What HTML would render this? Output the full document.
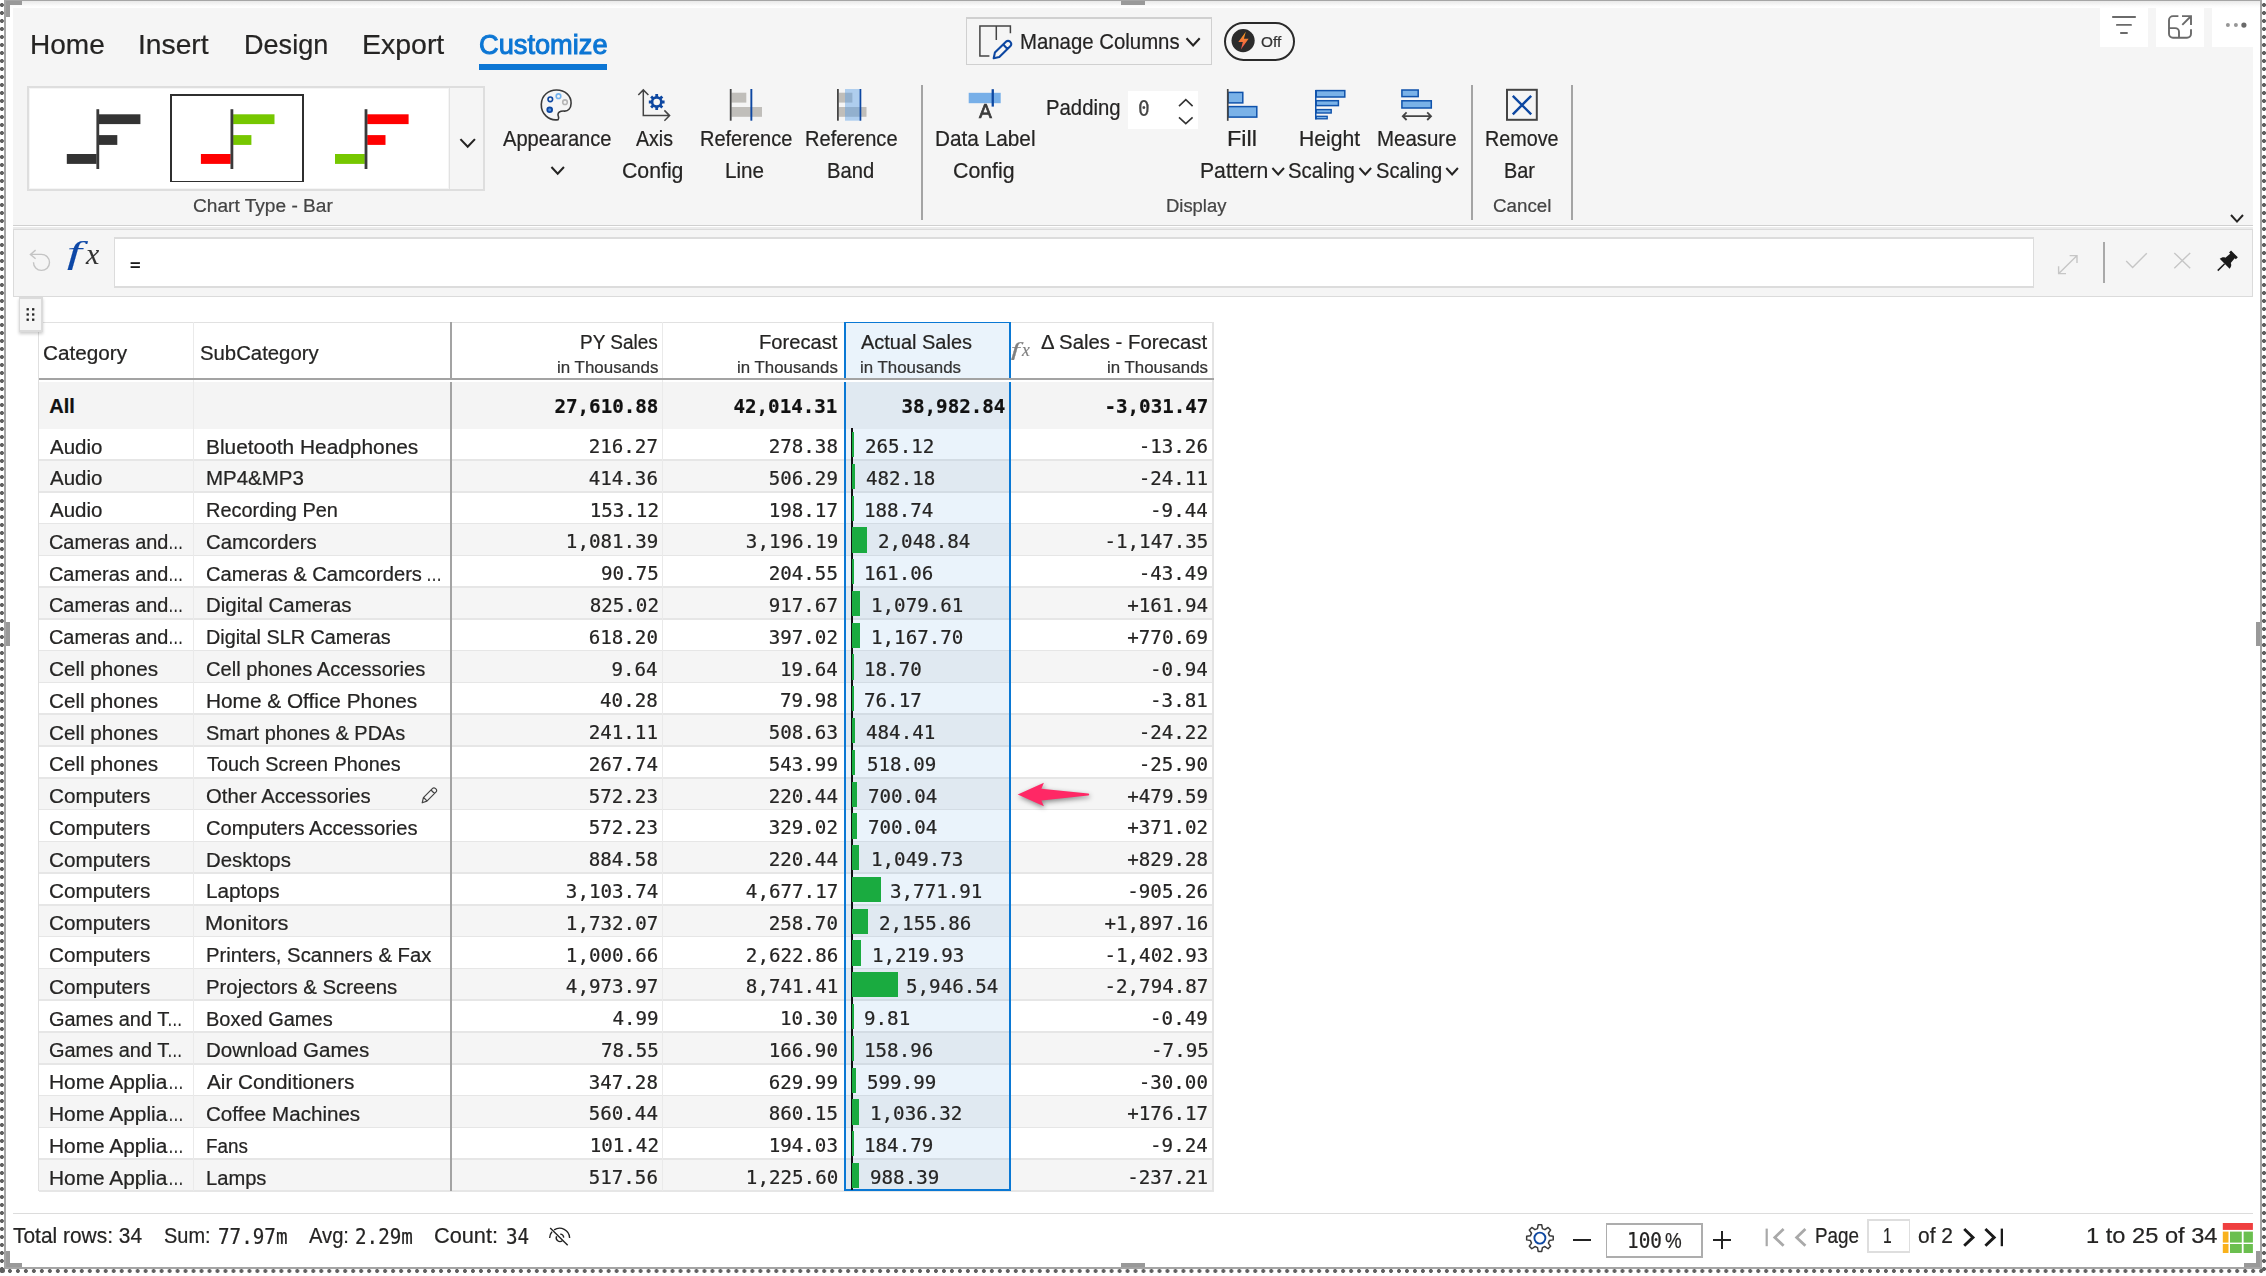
<!DOCTYPE html>
<html lang="en"><head><meta charset="utf-8"><title>Inforiver - Customize</title>
<style>
html,body{margin:0;padding:0}
body{width:2266px;height:1276px;background:#fff;overflow:hidden;position:relative;font-family:"Liberation Sans",sans-serif;color:#252423}
.b{position:absolute;display:block}
.t{position:absolute;white-space:pre;line-height:1;display:block;-webkit-text-stroke:0.22px currentColor}
.m{font-family:"DejaVu Sans Mono","Liberation Mono",monospace}
.s{font-family:"Liberation Serif",serif}
</style></head>
<body>
<!-- frame -->
<div class="b" style="left:0;top:0;width:4px;height:1274px;background:radial-gradient(circle at 1.9px 5px,#606060 0,#606060 1.6px,rgba(96,96,96,0) 2.3px);background-size:4px 8px"></div>
<div class="b" style="left:2262px;top:0;width:4px;height:1274px;background:radial-gradient(circle at 2px 5px,#606060 0,#606060 1.6px,rgba(96,96,96,0) 2.3px);background-size:4px 8px"></div>
<div class="b" style="left:0;top:1269px;width:2272px;height:4px;transform:scaleX(0.997875);transform-origin:0 0;background:radial-gradient(circle at 1.92px 2px,#606060 0,#606060 1.6px,rgba(96,96,96,0) 2.3px);background-size:8px 4px"></div>
<div class="b" style="left:4px;top:0px;width:2px;height:1269px;background:#a5a5a5;"></div>
<div class="b" style="left:2260px;top:0px;width:2px;height:1269px;background:#a5a5a5;"></div>
<div class="b" style="left:4px;top:0px;width:2258px;height:1px;background:#a5a5a5;"></div>
<div class="b" style="left:4px;top:1267px;width:2258px;height:2px;background:#a5a5a5;"></div>
<div class="b" style="left:6px;top:1px;width:2254px;height:7px;background:linear-gradient(#e9e9e9,#fbfbfb 70%,#fff);"></div>
<div class="b" style="left:6px;top:1px;width:16px;height:3.6px;background:#999;"></div>
<div class="b" style="left:6px;top:1px;width:3.8px;height:15.6px;background:#999;"></div>
<div class="b" style="left:1121px;top:1px;width:24px;height:3.8px;background:#999;"></div>
<div class="b" style="left:6px;top:622px;width:4px;height:24px;background:#999;"></div>
<div class="b" style="left:2256px;top:622px;width:4px;height:24px;background:#999;"></div>
<div class="b" style="left:6px;top:1263.3px;width:16px;height:3.7px;background:#999;"></div>
<div class="b" style="left:6px;top:1251.3px;width:3.8px;height:15.7px;background:#999;"></div>
<div class="b" style="left:1121px;top:1263.2px;width:24px;height:3.8px;background:#999;"></div>
<div class="b" style="left:2244.3px;top:1263.3px;width:15.7px;height:3.7px;background:#999;"></div>
<div class="b" style="left:2256.2px;top:1251.3px;width:3.8px;height:15.7px;background:#999;"></div>
<div class="b" style="left:0;top:1268px;width:5px;height:5px;border-radius:3px;background:#606060"></div>
<div class="b" style="left:12.9px;top:8px;width:2240.2px;height:217.2px;background:#f5f5f5;"></div>
<!-- ribbon -->
<span class="t" style="top:30.60px;font-size:28px;left:29.56px;transform:scaleX(1.0011);transform-origin:0 0;">Home</span>
<span class="t" style="top:30.60px;font-size:28px;left:138.06px;transform:scaleX(1.0083);transform-origin:0 0;">Insert</span>
<span class="t" style="top:30.60px;font-size:28px;left:243.83px;transform:scaleX(0.9672);transform-origin:0 0;">Design</span>
<span class="t" style="top:30.60px;font-size:28px;left:361.52px;transform:scaleX(1.0166);transform-origin:0 0;">Export</span>
<span class="t" style="top:30.60px;font-size:28px;color:#0c76d4;left:479.24px;transform:scaleX(0.9719);transform-origin:0 0;-webkit-text-stroke:1px #0c76d4;">Customize</span>
<div class="b" style="left:479.2px;top:64px;width:128.2px;height:5.9px;background:#0c76d4;"></div>
<div class="b" style="left:965.6px;top:16.9px;width:246.6px;height:1.7px;background:#d0d0d0;"></div>
<div class="b" style="left:965.6px;top:63.8px;width:246.6px;height:1.7px;background:#d0d0d0;"></div>
<div class="b" style="left:965.6px;top:16.9px;width:1.7px;height:48.6px;background:#d0d0d0;"></div>
<div class="b" style="left:1210.5px;top:16.9px;width:1.7px;height:48.6px;background:#d0d0d0;"></div>
<svg class="b" style="left:975px;top:20px" width="42" height="42" viewBox="975 20 42 42"><path d="M1010.4 33.2V26.1H979.9V56.1H989.4M996.3 26.1V40" fill="none" stroke="#444" stroke-width="1.5"/><path d="M1006.2 41.6a2.6 2.6 0 0 1 3.7 0l0.6 0.6a2.6 2.6 0 0 1 0 3.7L999.3 57l-5.6 1.2 1.2-5.6zM1003.2 44.6l4.3 4.3" fill="none" stroke="#0d47a1" stroke-width="2.1" stroke-linejoin="round"/></svg>
<span class="t" style="top:30.58px;font-size:22px;left:1019.67px;transform:scaleX(0.9256);transform-origin:0 0;">Manage Columns</span>
<svg class="b" style="left:1183px;top:35px" width="20" height="14" viewBox="1183 35 20 14"><path d="M1186.5 38.199999999999996L1193.1 45.4L1199.6999999999998 38.199999999999996" fill="none" stroke="#252423" stroke-width="2.1" stroke-linecap="butt" stroke-linejoin="miter"/></svg>
<div class="b" style="left:1224.4px;top:21.9px;width:70.8px;height:38.9px;border:2px solid #2a2a2a;border-radius:20px;box-sizing:border-box;"></div>
<svg class="b" style="left:1230px;top:28px" width="26" height="26" viewBox="1230 28 26 26"><defs><linearGradient id="lg" x1="0" y1="0" x2="0" y2="1"><stop offset="0" stop-color="#f9a11b"/><stop offset="1" stop-color="#ef4e55"/></linearGradient></defs><circle cx="1243.1" cy="40.6" r="11.6" fill="#2b2b2b"/><path d="M1245.8 31.8L1238.3 42.1h4.5l-1.9 7.5L1248.6 38.8h-4.7z" fill="url(#lg)"/></svg>
<span class="t" style="top:35.23px;font-size:14.5px;color:#333;left:1260.51px;transform:scaleX(1.0602);transform-origin:0 0;">Off</span>
<div class="b" style="left:2100px;top:8px;width:48px;height:39px;background:#fff;"></div>
<div class="b" style="left:2156px;top:8px;width:48px;height:39px;background:#fff;"></div>
<div class="b" style="left:2212px;top:8px;width:41px;height:39px;background:#fff;"></div>
<svg class="b" style="left:2108px;top:10px" width="32" height="30" viewBox="2108 10 32 30"><path d="M2112.9 17H2135.1M2116.9 24.9H2131M2120.9 33H2127" stroke="#6a6a6a" stroke-width="1.9" stroke-linecap="round" fill="none"/></svg>
<svg class="b" style="left:2164px;top:10px" width="32" height="32" viewBox="2164 10 32 32"><path d="M2178.4 16.15H2173a4 4 0 0 0-4 4V33.8a4 4 0 0 0 4 4h14a4 4 0 0 0 4-4V29.2" fill="none" stroke="#6a6a6a" stroke-width="1.9"/><path d="M2169 28.1h6.2a3.8 3.8 0 0 1 3.8 3.8v5.9" fill="none" stroke="#6a6a6a" stroke-width="1.9"/><path d="M2182.3 24.8L2190.6 16.5M2182 16.15h9v8.8" fill="none" stroke="#6a6a6a" stroke-width="1.9"/></svg>
<svg class="b" style="left:2222px;top:20px" width="28" height="10" viewBox="2222 20 28 10"><circle cx="2227.9" cy="25.1" r="2" fill="#969696"/><circle cx="2235.9" cy="25.1" r="2" fill="#969696"/><circle cx="2243.9" cy="25.1" r="2.6" fill="#6a6a6a"/></svg>
<svg class="b" style="left:2228px;top:212px" width="19" height="13" viewBox="2228 212 19 13"><path d="M2231.0 215.0L2237 221.60000000000002L2243.0 215.0" fill="none" stroke="#252423" stroke-width="2" stroke-linecap="butt" stroke-linejoin="miter"/></svg>
<div class="b" style="left:27.3px;top:86.3px;width:457.8px;height:104.4px;background:#f5f5f5;border:2px solid #dedede;box-sizing:border-box;"></div>
<div class="b" style="left:29.8px;top:88.8px;width:418px;height:99.4px;background:#fff;"></div>
<div class="b" style="left:448.5px;top:88px;width:1.3px;height:101px;background:#e2e2e2;"></div>
<div class="b" style="left:170px;top:94.3px;width:134px;height:1.7px;background:#2f2f2f;"></div>
<div class="b" style="left:170px;top:180.6px;width:134px;height:1.7px;background:#2f2f2f;"></div>
<div class="b" style="left:170px;top:94.3px;width:1.7px;height:88px;background:#2f2f2f;"></div>
<div class="b" style="left:302.3px;top:94.3px;width:1.7px;height:88px;background:#2f2f2f;"></div>
<svg class="b" style="left:60px;top:100px" width="370" height="80" viewBox="60 100 370 80"><rect x="99.0" y="114.3" width="41.4" height="9.8" fill="#333"/><rect x="99.0" y="135.1" width="18.3" height="9.8" fill="#333"/><rect x="66.80000000000001" y="154" width="29.8" height="9.9" fill="#333"/><rect x="96.4" y="109.2" width="2.8" height="59.8" fill="#3a3a3a"/><rect x="233.1" y="114.3" width="41.4" height="9.8" fill="#76c700"/><rect x="233.1" y="135.1" width="18.3" height="9.8" fill="#76c700"/><rect x="200.9" y="154" width="29.8" height="9.9" fill="#ff0000"/><rect x="230.5" y="109.2" width="2.8" height="59.8" fill="#3a3a3a"/><rect x="367.20000000000005" y="114.3" width="41.4" height="9.8" fill="#ff0000"/><rect x="367.20000000000005" y="135.1" width="18.3" height="9.8" fill="#ff0000"/><rect x="335.0" y="154" width="29.8" height="9.9" fill="#76c700"/><rect x="364.6" y="109.2" width="2.8" height="59.8" fill="#3a3a3a"/></svg>
<svg class="b" style="left:457px;top:136px" width="21" height="14" viewBox="457 136 21 14"><path d="M460.45 139.1L467.7 146.70000000000002L474.95 139.1" fill="none" stroke="#252423" stroke-width="2.1" stroke-linecap="butt" stroke-linejoin="miter"/></svg>
<span class="t" style="top:196.69px;font-size:18.8px;color:#444;left:193.34px;transform:scaleX(1.0176);transform-origin:0 0;">Chart Type - Bar</span>
<div class="b" style="left:921.1px;top:85.1px;width:2px;height:135.3px;background:#a4a4a4;"></div>
<div class="b" style="left:1470.6px;top:85.1px;width:2px;height:135.3px;background:#a4a4a4;"></div>
<div class="b" style="left:1571.05px;top:85.1px;width:2px;height:135.3px;background:#a4a4a4;"></div>
<span class="t" style="top:128.02px;font-size:21.6px;left:502.60px;transform:scaleX(0.9320);transform-origin:0 0;">Appearance</span>
<svg class="b" style="left:548px;top:164px" width="19" height="13" viewBox="548 164 19 13"><path d="M551.45 167.0L557.7 173.8L563.95 167.0" fill="none" stroke="#252423" stroke-width="2" stroke-linecap="butt" stroke-linejoin="miter"/></svg>
<span class="t" style="top:128.02px;font-size:21.6px;left:636.00px;transform:scaleX(0.9060);transform-origin:0 0;">Axis</span>
<span class="t" style="top:159.82px;font-size:21.6px;left:621.74px;transform:scaleX(0.9843);transform-origin:0 0;">Config</span>
<span class="t" style="top:128.02px;font-size:21.6px;left:699.60px;transform:scaleX(0.9259);transform-origin:0 0;">Reference</span>
<span class="t" style="top:159.82px;font-size:21.6px;left:724.55px;transform:scaleX(0.9548);transform-origin:0 0;">Line</span>
<span class="t" style="top:128.02px;font-size:21.6px;left:805.49px;transform:scaleX(0.9290);transform-origin:0 0;">Reference</span>
<span class="t" style="top:159.82px;font-size:21.6px;left:826.69px;transform:scaleX(0.9344);transform-origin:0 0;">Band</span>
<span class="t" style="top:128.02px;font-size:21.6px;left:934.64px;transform:scaleX(0.9624);transform-origin:0 0;">Data Label</span>
<span class="t" style="top:159.82px;font-size:21.6px;left:952.54px;transform:scaleX(0.9860);transform-origin:0 0;">Config</span>
<span class="t" style="top:97.02px;font-size:21.6px;left:1045.98px;transform:scaleX(0.9404);transform-origin:0 0;">Padding</span>
<div class="b" style="left:1127.7px;top:90.6px;width:70.4px;height:38.5px;background:#fff;"></div>
<span class="t m" style="top:99.43px;font-size:21px;color:#444;left:1137.63px;transform:scaleX(0.9300);transform-origin:0 0;">0</span>
<svg class="b" style="left:1176px;top:96px" width="20" height="13" viewBox="1176 96 20 13"><path d="M1179.0 106.10000000000001L1185.8 99.7L1192.6 106.10000000000001" fill="none" stroke="#333" stroke-width="1.6" stroke-linecap="butt" stroke-linejoin="miter"/></svg>
<svg class="b" style="left:1176px;top:114px" width="20" height="13" viewBox="1176 114 20 13"><path d="M1179.0 117.3L1185.8 123.7L1192.6 117.3" fill="none" stroke="#333" stroke-width="1.6" stroke-linecap="butt" stroke-linejoin="miter"/></svg>
<span class="t" style="top:128.02px;font-size:21.6px;left:1227.42px;transform:scaleX(1.0857);transform-origin:0 0;">Fill</span>
<span class="t" style="top:159.82px;font-size:21.6px;left:1199.71px;transform:scaleX(0.9800);transform-origin:0 0;">Pattern</span>
<svg class="b" style="left:1269px;top:165px" width="18" height="13" viewBox="1269 165 18 13"><path d="M1272.4 168.0L1278.2 174.39999999999998L1284.0 168.0" fill="none" stroke="#252423" stroke-width="2" stroke-linecap="butt" stroke-linejoin="miter"/></svg>
<span class="t" style="top:128.02px;font-size:21.6px;left:1299.21px;transform:scaleX(0.9787);transform-origin:0 0;">Height</span>
<span class="t" style="top:159.82px;font-size:21.6px;left:1288.48px;transform:scaleX(0.9435);transform-origin:0 0;">Scaling</span>
<svg class="b" style="left:1356px;top:165px" width="18" height="13" viewBox="1356 165 18 13"><path d="M1359.5 168.0L1365.3 174.39999999999998L1371.1 168.0" fill="none" stroke="#252423" stroke-width="2" stroke-linecap="butt" stroke-linejoin="miter"/></svg>
<span class="t" style="top:128.02px;font-size:21.6px;left:1376.76px;transform:scaleX(0.9468);transform-origin:0 0;">Measure</span>
<span class="t" style="top:159.82px;font-size:21.6px;left:1375.69px;transform:scaleX(0.9332);transform-origin:0 0;">Scaling</span>
<svg class="b" style="left:1443px;top:165px" width="18" height="13" viewBox="1443 165 18 13"><path d="M1446.3 168.0L1452.1 174.39999999999998L1457.8999999999999 168.0" fill="none" stroke="#252423" stroke-width="2" stroke-linecap="butt" stroke-linejoin="miter"/></svg>
<span class="t" style="top:128.02px;font-size:21.6px;left:1484.62px;transform:scaleX(0.9144);transform-origin:0 0;">Remove</span>
<span class="t" style="top:159.82px;font-size:21.6px;left:1504.11px;transform:scaleX(0.9196);transform-origin:0 0;">Bar</span>
<span class="t" style="top:196.69px;font-size:18.8px;color:#444;left:1165.93px;transform:scaleX(0.9807);transform-origin:0 0;">Display</span>
<span class="t" style="top:196.69px;font-size:18.8px;color:#444;left:1493.06px;transform:scaleX(0.9981);transform-origin:0 0;">Cancel</span>
<svg class="b" style="left:536px;top:85px" width="40" height="40" viewBox="536 85 40 40"><path d="M558.2 119.6C549 121.2 541 114 541.3 104.3C541.6 95.3 548.6 89.9 556.6 90C565.2 90.1 571.2 96 571.1 103.2C571 108.8 568 111.3 564.3 111.1C561 110.9 558.3 111.9 558 114.4C557.8 116.2 559.6 117.6 558.2 119.6Z" fill="none" stroke="#3a3a3a" stroke-width="1.6"/><circle cx="550.3" cy="99.3" r="2.3" fill="none" stroke="#0d47a1" stroke-width="1.6"/><circle cx="558.5" cy="96.2" r="2.3" fill="none" stroke="#74b3ee" stroke-width="1.6"/><circle cx="565" cy="102.2" r="2.3" fill="none" stroke="#b5b5b5" stroke-width="1.6"/><circle cx="549.7" cy="109.7" r="2.4" fill="#4d8fe0" stroke="#0d47a1" stroke-width="1.8"/></svg>
<svg class="b" style="left:634px;top:85px" width="40" height="40" viewBox="634 85 40 40"><path d="M643.3 90V115.6H669.2M638.3 95L643.3 89.9L648.4 95M664.4 110.4L669.6 115.6L664.4 120.8" fill="none" stroke="#444" stroke-width="1.5"/><path d="M664.58 100.62L664.58 103.38L662.44 103.38L661.73 105.08L663.25 106.60L661.30 108.55L659.78 107.03L658.08 107.74L658.08 109.88L655.32 109.88L655.32 107.74L653.62 107.03L652.10 108.55L650.15 106.60L651.67 105.08L650.96 103.38L648.82 103.38L648.82 100.62L650.96 100.62L651.67 98.92L650.15 97.40L652.10 95.45L653.62 96.97L655.32 96.26L655.32 94.12L658.08 94.12L658.08 96.26L659.78 96.97L661.30 95.45L663.25 97.40L661.73 98.92L662.44 100.62ZM660.0 102a3.3 3.3 0 1 0 -6.6 0a3.3 3.3 0 1 0 6.6 0Z" fill="#0d47a1" fill-rule="evenodd"/></svg>
<svg class="b" style="left:726px;top:85px" width="40" height="40" viewBox="726 85 40 40"><rect x="731.4" y="92.7" width="14.9" height="9.9" fill="#c0beba"/><rect x="731.4" y="107" width="30.6" height="9.8" fill="#c0beba"/><rect x="729.8" y="89" width="1.8" height="31.7" fill="#444"/><rect x="750.4" y="89" width="1.9" height="31.7" fill="#0d47a1"/></svg>
<svg class="b" style="left:834px;top:85px" width="40" height="40" viewBox="834 85 40 40"><rect x="838.6" y="92.7" width="13.8" height="9.9" fill="#c0beba"/><rect x="838.6" y="107" width="27.9" height="9.8" fill="#c0beba"/><rect x="837" y="89" width="1.8" height="31.7" fill="#444"/><rect x="845" y="89" width="15.6" height="31.7" fill="#5b9fe6" fill-opacity="0.45"/><rect x="859.6" y="89" width="1.7" height="31.7" fill="#0d47a1"/></svg>
<svg class="b" style="left:965px;top:86px" width="40" height="36" viewBox="965 86 40 36"><rect x="968.7" y="92.8" width="32" height="10.4" fill="#77afe8"/><rect x="991.6" y="89.2" width="2.3" height="17.4" fill="#0d47a1"/></svg>
<span class="t" style="top:102.22px;font-size:19.7px;color:#3c3c3c;left:978.50px;transform:scaleX(0.9771);transform-origin:0 0;-webkit-text-stroke:0.7px #3c3c3c;">A</span>
<svg class="b" style="left:1223px;top:86px" width="40" height="38" viewBox="1223 86 40 38"><rect x="1228.2" y="92.4" width="14.6" height="10.5" fill="#7ab2e8" stroke="#0f52ab" stroke-width="1.5"/><rect x="1228.2" y="106.6" width="28.6" height="10.5" fill="#7ab2e8" stroke="#0f52ab" stroke-width="1.5"/><rect x="1226.9" y="89" width="1.7" height="31.8" fill="#444"/></svg>
<svg class="b" style="left:1311px;top:86px" width="40" height="38" viewBox="1311 86 40 38"><rect x="1316.2" y="90.6" width="28.6" height="6.4" fill="#7ab2e8" stroke="#0f52ab" stroke-width="1.5"/><rect x="1316.2" y="100.7" width="22.2" height="4.9" fill="#7ab2e8" stroke="#0f52ab" stroke-width="1.5"/><rect x="1316.2" y="109.6" width="15" height="3.4" fill="#7ab2e8" stroke="#0f52ab" stroke-width="1.4"/><rect x="1316.2" y="116.3" width="11" height="2.5" fill="#7ab2e8" stroke="#0f52ab" stroke-width="1.3"/><rect x="1315" y="90" width="1.5" height="29.5" fill="#0f52ab"/></svg>
<svg class="b" style="left:1398px;top:86px" width="40" height="38" viewBox="1398 86 40 38"><rect x="1401.9" y="90" width="16.3" height="6.6" fill="#7ab2e8" stroke="#0f52ab" stroke-width="1.5"/><rect x="1401.9" y="100.8" width="29.4" height="7.2" fill="#7ab2e8" stroke="#0f52ab" stroke-width="1.5"/><path d="M1403 116.2H1430.8M1406.6 112.4L1402.8 116.2L1406.6 120M1427.2 112.4L1431 116.2L1427.2 120" fill="none" stroke="#444" stroke-width="1.8"/></svg>
<svg class="b" style="left:1502px;top:86px" width="40" height="38" viewBox="1502 86 40 38"><rect x="1507" y="89.8" width="29.8" height="30" fill="none" stroke="#444" stroke-width="2"/><path d="M1512.8 95.8L1531.2 114.4M1531.2 95.8L1512.8 114.4" stroke="#0d47a1" stroke-width="2.4" fill="none"/></svg>
<!-- formula bar -->
<div class="b" style="left:12.9px;top:224.9px;width:2240.2px;height:1.6px;background:#d0d0d0;"></div>
<div class="b" style="left:12.9px;top:226.5px;width:2240.2px;height:2.7px;background:#ebebeb;"></div>
<div class="b" style="left:13px;top:229.1px;width:2240px;height:67.8px;background:#f5f5f5;"></div>
<div class="b" style="left:13px;top:229.1px;width:2240px;height:1.4px;background:#dbdbdb;"></div>
<div class="b" style="left:13px;top:295.5px;width:2240px;height:1.4px;background:#dbdbdb;"></div>
<div class="b" style="left:13px;top:229.1px;width:1.4px;height:67.8px;background:#dbdbdb;"></div>
<div class="b" style="left:2251.6px;top:229.1px;width:1.4px;height:67.8px;background:#dbdbdb;"></div>
<div class="b" style="left:113.5px;top:237.3px;width:1920.6px;height:50.4px;background:#fff;"></div>
<div class="b" style="left:113.5px;top:237.3px;width:1920.6px;height:1.5px;background:#dcdcdc;"></div>
<div class="b" style="left:113.5px;top:286.2px;width:1920.6px;height:1.5px;background:#dcdcdc;"></div>
<div class="b" style="left:113.5px;top:237.3px;width:1.5px;height:50.4px;background:#dcdcdc;"></div>
<div class="b" style="left:2032.6px;top:237.3px;width:1.5px;height:50.4px;background:#dcdcdc;"></div>
<svg class="b" style="left:26px;top:246px" width="30" height="30" viewBox="26 246 30 30"><path d="M35.6 250.1L30.4 254.4L35.6 258.7M30.8 254.4H41.5A8 8 0 1 1 33.5 262.2" fill="none" stroke="#c4c4c4" stroke-width="1.4"/></svg>
<span class="t s" style="top:237.86px;font-size:30.5px;color:#0d47a6;left:67.46px;transform:scaleX(1.7543);transform-origin:0 0;font-style:italic;-webkit-text-stroke:0.1px #0d47a6;">f</span>
<span class="t s" style="top:238.77px;font-size:30px;color:#333;left:85.85px;transform:scaleX(0.9926);transform-origin:0 0;font-style:italic;-webkit-text-stroke:0.1px #333;">x</span>
<span class="t m" style="top:254.76px;font-size:19.2px;color:#1a1a1a;left:129.89px;transform:scaleX(0.9200);transform-origin:0 0;">=</span>
<svg class="b" style="left:2054px;top:250px" width="28" height="28" viewBox="2054 250 28 28"><path d="M2058.8 273.4L2076.8 255.8M2069.6 255.6H2077V263M2058.6 266.2V273.6H2066" fill="none" stroke="#c6c6c6" stroke-width="1.4"/></svg>
<div class="b" style="left:2103.1px;top:242.2px;width:1.7px;height:40.6px;background:#a9a9a9;"></div>
<svg class="b" style="left:2122px;top:248px" width="30" height="24" viewBox="2122 248 30 24"><path d="M2126.2 261L2132.6 267.4L2146.8 253.2" fill="none" stroke="#c6c6c6" stroke-width="1.4"/></svg>
<svg class="b" style="left:2170px;top:248px" width="26" height="24" viewBox="2170 248 26 24"><path d="M2174.3 252.9L2190.2 268.2M2190.2 252.9L2174.3 268.2" fill="none" stroke="#c6c6c6" stroke-width="1.4"/></svg>
<svg class="b" style="left:2212px;top:246px" width="32" height="30" viewBox="2212 246 32 30"><g transform="translate(2224.4 264) rotate(45)"><path d="M-4.8 -14.2H4.8V-11.4H3.2L3.8 -5.2C5.6 -4.6 6.9 -3 7 -0.4H-7C-6.9 -3 -5.6 -4.6 -3.8 -5.2L-3.2 -11.4H-4.8Z" fill="#1a1a1a"/><path d="M0 -0.4V9.4" stroke="#1a1a1a" stroke-width="1.5"/></g></svg>
<!-- table -->
<div class="b" style="left:38.6px;top:321.9px;width:1175.0px;height:1.3px;background:#e1e1e1;"></div>
<div class="b" style="left:38.6px;top:381.9px;width:1175.0px;height:46.70px;background:#f4f4f4;"></div>
<div class="b" style="left:38.6px;top:459.98px;width:1175.0px;height:31.78px;background:#f5f5f5;"></div>
<div class="b" style="left:38.6px;top:523.54px;width:1175.0px;height:31.78px;background:#f5f5f5;"></div>
<div class="b" style="left:38.6px;top:587.10px;width:1175.0px;height:31.78px;background:#f5f5f5;"></div>
<div class="b" style="left:38.6px;top:650.66px;width:1175.0px;height:31.78px;background:#f5f5f5;"></div>
<div class="b" style="left:38.6px;top:714.22px;width:1175.0px;height:31.78px;background:#f5f5f5;"></div>
<div class="b" style="left:38.6px;top:777.78px;width:1175.0px;height:31.78px;background:#f5f5f5;"></div>
<div class="b" style="left:38.6px;top:841.34px;width:1175.0px;height:31.78px;background:#f5f5f5;"></div>
<div class="b" style="left:38.6px;top:904.90px;width:1175.0px;height:31.78px;background:#f5f5f5;"></div>
<div class="b" style="left:38.6px;top:968.46px;width:1175.0px;height:31.78px;background:#f5f5f5;"></div>
<div class="b" style="left:38.6px;top:1032.02px;width:1175.0px;height:31.78px;background:#f5f5f5;"></div>
<div class="b" style="left:38.6px;top:1095.58px;width:1175.0px;height:31.78px;background:#f5f5f5;"></div>
<div class="b" style="left:38.6px;top:1159.14px;width:1175.0px;height:31.78px;background:#f5f5f5;"></div>
<div class="b" style="left:38.6px;top:459.18px;width:1175.0px;height:1.6px;background:#e6e6e6;"></div>
<div class="b" style="left:38.6px;top:490.96px;width:1175.0px;height:1.6px;background:#e6e6e6;"></div>
<div class="b" style="left:38.6px;top:522.74px;width:1175.0px;height:1.6px;background:#e6e6e6;"></div>
<div class="b" style="left:38.6px;top:554.52px;width:1175.0px;height:1.6px;background:#e6e6e6;"></div>
<div class="b" style="left:38.6px;top:586.30px;width:1175.0px;height:1.6px;background:#e6e6e6;"></div>
<div class="b" style="left:38.6px;top:618.08px;width:1175.0px;height:1.6px;background:#e6e6e6;"></div>
<div class="b" style="left:38.6px;top:649.86px;width:1175.0px;height:1.6px;background:#e6e6e6;"></div>
<div class="b" style="left:38.6px;top:681.64px;width:1175.0px;height:1.6px;background:#e6e6e6;"></div>
<div class="b" style="left:38.6px;top:713.42px;width:1175.0px;height:1.6px;background:#e6e6e6;"></div>
<div class="b" style="left:38.6px;top:745.20px;width:1175.0px;height:1.6px;background:#e6e6e6;"></div>
<div class="b" style="left:38.6px;top:776.98px;width:1175.0px;height:1.6px;background:#e6e6e6;"></div>
<div class="b" style="left:38.6px;top:808.76px;width:1175.0px;height:1.6px;background:#e6e6e6;"></div>
<div class="b" style="left:38.6px;top:840.54px;width:1175.0px;height:1.6px;background:#e6e6e6;"></div>
<div class="b" style="left:38.6px;top:872.32px;width:1175.0px;height:1.6px;background:#e6e6e6;"></div>
<div class="b" style="left:38.6px;top:904.10px;width:1175.0px;height:1.6px;background:#e6e6e6;"></div>
<div class="b" style="left:38.6px;top:935.88px;width:1175.0px;height:1.6px;background:#e6e6e6;"></div>
<div class="b" style="left:38.6px;top:967.66px;width:1175.0px;height:1.6px;background:#e6e6e6;"></div>
<div class="b" style="left:38.6px;top:999.44px;width:1175.0px;height:1.6px;background:#e6e6e6;"></div>
<div class="b" style="left:38.6px;top:1031.22px;width:1175.0px;height:1.6px;background:#e6e6e6;"></div>
<div class="b" style="left:38.6px;top:1063.00px;width:1175.0px;height:1.6px;background:#e6e6e6;"></div>
<div class="b" style="left:38.6px;top:1094.78px;width:1175.0px;height:1.6px;background:#e6e6e6;"></div>
<div class="b" style="left:38.6px;top:1126.56px;width:1175.0px;height:1.6px;background:#e6e6e6;"></div>
<div class="b" style="left:38.6px;top:1158.34px;width:1175.0px;height:1.6px;background:#e6e6e6;"></div>
<div class="b" style="left:38.6px;top:1190.12px;width:1175.0px;height:1.6px;background:#e6e6e6;"></div>
<div class="b" style="left:37.9px;top:322px;width:1.3px;height:869.4200000000001px;background:#e0e0e0;"></div>
<div class="b" style="left:192.9px;top:322px;width:1.45px;height:869.4200000000001px;background:#eaeaea;"></div>
<div class="b" style="left:661.9px;top:322px;width:1.45px;height:869.4200000000001px;background:#eaeaea;"></div>
<div class="b" style="left:1212.3px;top:322px;width:1.3px;height:869.4200000000001px;background:#e4e4e4;"></div>
<div class="b" style="left:450.1px;top:322px;width:1.9px;height:58px;background:#a3a3a3;"></div>
<div class="b" style="left:450.1px;top:382.1px;width:1.9px;height:809.32px;background:#a3a3a3;"></div>
<div class="b" style="left:844.1px;top:321.8px;width:166.8px;height:58.1px;background:rgba(15,120,212,0.085);"></div>
<div class="b" style="left:844.1px;top:321.8px;width:166.8px;height:1.6px;background:#0a78d4;"></div>
<div class="b" style="left:844.1px;top:321.8px;width:1.6px;height:58.1px;background:#0a78d4;"></div>
<div class="b" style="left:1009.3px;top:321.8px;width:1.6px;height:58.1px;background:#0a78d4;"></div>
<div class="b" style="left:844.1px;top:382.1px;width:166.8px;height:808.5px;background:rgba(15,120,212,0.085);"></div>
<div class="b" style="left:844.1px;top:1189.0px;width:166.8px;height:1.6px;background:#0a78d4;"></div>
<div class="b" style="left:844.1px;top:382.1px;width:1.6px;height:808.5px;background:#0a78d4;"></div>
<div class="b" style="left:1009.3px;top:382.1px;width:1.6px;height:808.5px;background:#0a78d4;"></div>
<div class="b" style="left:38.6px;top:378.1px;width:1175.0px;height:1.85px;background:#a3a3a3;"></div>
<span class="t" style="top:342.77px;font-size:20px;left:43.36px;transform:scaleX(1.0362);transform-origin:0 0;">Category</span>
<span class="t" style="top:342.77px;font-size:20px;left:200.19px;transform:scaleX(1.0164);transform-origin:0 0;">SubCategory</span>
<span class="t" style="top:331.77px;font-size:20px;left:580.28px;transform:scaleX(0.9497);transform-origin:0 0;">PY Sales</span>
<span class="t" style="top:331.77px;font-size:20px;left:758.99px;transform:scaleX(1.0079);transform-origin:0 0;">Forecast</span>
<span class="t" style="top:331.77px;font-size:20px;left:861.20px;transform:scaleX(0.9982);transform-origin:0 0;">Actual Sales</span>
<span class="t" style="top:331.77px;font-size:20px;left:1041.39px;transform:scaleX(1.0166);transform-origin:0 0;">Δ Sales - Forecast</span>
<span class="t" style="top:358.92px;font-size:16.4px;color:#333;left:556.60px;transform:scaleX(1.0330);transform-origin:0 0;">in Thousands</span>
<span class="t" style="top:358.92px;font-size:16.4px;color:#333;left:736.90px;transform:scaleX(1.0278);transform-origin:0 0;">in Thousands</span>
<span class="t" style="top:358.92px;font-size:16.4px;color:#333;left:860.00px;transform:scaleX(1.0289);transform-origin:0 0;">in Thousands</span>
<span class="t" style="top:358.92px;font-size:16.4px;color:#333;left:1107.00px;transform:scaleX(1.0289);transform-origin:0 0;">in Thousands</span>
<span class="t s" style="top:340.51px;font-size:18.5px;color:#808080;left:1011.29px;transform:scaleX(1.6988);transform-origin:0 0;font-style:italic;">f</span>
<span class="t s" style="top:340.71px;font-size:18.5px;color:#808080;left:1022.16px;transform:scaleX(0.9489);transform-origin:0 0;font-style:italic;">x</span>
<span class="t" style="top:395.87px;font-size:20px;font-weight:700;color:#111;left:49.30px;">All</span>
<span class="t m" style="top:395.81px;font-size:20.2px;font-weight:700;color:#111;right:1607.59px;transform:scaleX(0.9500);transform-origin:100% 0;">27,610.88</span>
<span class="t m" style="top:395.81px;font-size:20.2px;font-weight:700;color:#111;right:1428.27px;transform:scaleX(0.9500);transform-origin:100% 0;">42,014.31</span>
<span class="t m" style="top:395.81px;font-size:20.2px;font-weight:700;color:#111;right:1260.57px;transform:scaleX(0.9500);transform-origin:100% 0;">38,982.84</span>
<span class="t m" style="top:395.81px;font-size:20.2px;font-weight:700;color:#111;right:1057.50px;transform:scaleX(0.9500);transform-origin:100% 0;">-3,031.47</span>
<div class="b" style="left:851.0px;top:428.20px;width:1.5px;height:762.10px;background:#111;"></div>
<span class="t" style="top:436.57px;font-size:20px;left:50.00px;transform:scaleX(1.0258);transform-origin:0 0;">Audio</span>
<span class="t" style="top:436.57px;font-size:20px;left:205.53px;transform:scaleX(1.0432);transform-origin:0 0;">Bluetooth Headphones</span>
<span class="t m" style="top:436.11px;font-size:20.2px;right:1607.62px;transform:scaleX(0.9500);transform-origin:100% 0;">216.27</span>
<span class="t m" style="top:436.11px;font-size:20.2px;right:1428.21px;transform:scaleX(0.9500);transform-origin:100% 0;">278.38</span>
<span class="t m" style="top:436.11px;font-size:20.2px;right:1058.01px;transform:scaleX(0.9500);transform-origin:100% 0;">-13.26</span>
<div class="b" style="left:851.8000000000001px;top:432.00px;width:1.90px;height:25.2px;background:#1aab40;"></div>
<span class="t m" style="top:436.11px;font-size:20.2px;left:864.83px;transform:scaleX(0.9500);transform-origin:0 0;">265.12</span>
<span class="t" style="top:468.35px;font-size:20px;left:50.00px;transform:scaleX(1.0258);transform-origin:0 0;">Audio</span>
<span class="t" style="top:468.35px;font-size:20px;left:205.56px;transform:scaleX(1.0236);transform-origin:0 0;">MP4&amp;MP3</span>
<span class="t m" style="top:467.89px;font-size:20.2px;right:1607.91px;transform:scaleX(0.9500);transform-origin:100% 0;">414.36</span>
<span class="t m" style="top:467.89px;font-size:20.2px;right:1428.11px;transform:scaleX(0.9500);transform-origin:100% 0;">506.29</span>
<span class="t m" style="top:467.89px;font-size:20.2px;right:1057.91px;transform:scaleX(0.9500);transform-origin:100% 0;">-24.11</span>
<div class="b" style="left:851.8000000000001px;top:463.78px;width:3.26px;height:25.2px;background:#1aab40;"></div>
<span class="t m" style="top:467.89px;font-size:20.2px;left:866.41px;transform:scaleX(0.9500);transform-origin:0 0;">482.18</span>
<span class="t" style="top:500.13px;font-size:20px;left:50.00px;transform:scaleX(1.0258);transform-origin:0 0;">Audio</span>
<span class="t" style="top:500.13px;font-size:20px;left:205.60px;transform:scaleX(0.9969);transform-origin:0 0;">Recording Pen</span>
<span class="t m" style="top:499.67px;font-size:20.2px;right:1607.52px;transform:scaleX(0.9500);transform-origin:100% 0;">153.12</span>
<span class="t m" style="top:499.67px;font-size:20.2px;right:1427.92px;transform:scaleX(0.9500);transform-origin:100% 0;">198.17</span>
<span class="t m" style="top:499.67px;font-size:20.2px;right:1058.33px;transform:scaleX(0.9500);transform-origin:100% 0;">-9.44</span>
<div class="b" style="left:851.8000000000001px;top:495.56px;width:1.90px;height:25.2px;background:#1aab40;"></div>
<span class="t m" style="top:499.67px;font-size:20.2px;left:864.40px;transform:scaleX(0.9500);transform-origin:0 0;">188.74</span>
<span class="t" style="top:531.91px;font-size:20px;left:49.01px;transform:scaleX(0.9941);transform-origin:0 0;">Cameras and</span>
<span class="t" style="top:531.91px;font-size:20px;left:167.83px;transform:scaleX(0.7671);transform-origin:0 0;">…</span>
<span class="t" style="top:531.91px;font-size:20px;left:206.18px;transform:scaleX(1.0168);transform-origin:0 0;">Camcorders</span>
<span class="t m" style="top:531.45px;font-size:20.2px;right:1607.83px;transform:scaleX(0.9500);transform-origin:100% 0;">1,081.39</span>
<span class="t m" style="top:531.45px;font-size:20.2px;right:1428.13px;transform:scaleX(0.9500);transform-origin:100% 0;">3,196.19</span>
<span class="t m" style="top:531.45px;font-size:20.2px;right:1057.60px;transform:scaleX(0.9500);transform-origin:100% 0;">-1,147.35</span>
<div class="b" style="left:851.8000000000001px;top:527.34px;width:15.47px;height:25.2px;background:#1aab40;"></div>
<span class="t m" style="top:531.45px;font-size:20.2px;left:877.83px;transform:scaleX(0.9500);transform-origin:0 0;">2,048.84</span>
<span class="t" style="top:563.69px;font-size:20px;left:49.01px;transform:scaleX(0.9941);transform-origin:0 0;">Cameras and</span>
<span class="t" style="top:563.69px;font-size:20px;left:167.83px;transform:scaleX(0.7671);transform-origin:0 0;">…</span>
<span class="t" style="top:563.69px;font-size:20px;left:206.19px;transform:scaleX(1.0066);transform-origin:0 0;">Cameras &amp; Camcorders</span>
<span class="t" style="top:563.69px;font-size:20px;left:426.24px;transform:scaleX(0.8014);transform-origin:0 0;">…</span>
<span class="t m" style="top:563.23px;font-size:20.2px;right:1607.56px;transform:scaleX(0.9500);transform-origin:100% 0;">90.75</span>
<span class="t m" style="top:563.23px;font-size:20.2px;right:1427.82px;transform:scaleX(0.9500);transform-origin:100% 0;">204.55</span>
<span class="t m" style="top:563.23px;font-size:20.2px;right:1057.91px;transform:scaleX(0.9500);transform-origin:100% 0;">-43.49</span>
<div class="b" style="left:851.8000000000001px;top:559.12px;width:1.90px;height:25.2px;background:#1aab40;"></div>
<span class="t m" style="top:563.23px;font-size:20.2px;left:864.40px;transform:scaleX(0.9500);transform-origin:0 0;">161.06</span>
<span class="t" style="top:595.47px;font-size:20px;left:49.01px;transform:scaleX(0.9941);transform-origin:0 0;">Cameras and</span>
<span class="t" style="top:595.47px;font-size:20px;left:167.83px;transform:scaleX(0.7671);transform-origin:0 0;">…</span>
<span class="t" style="top:595.47px;font-size:20px;left:205.56px;transform:scaleX(1.0229);transform-origin:0 0;">Digital Cameras</span>
<span class="t m" style="top:595.01px;font-size:20.2px;right:1607.52px;transform:scaleX(0.9500);transform-origin:100% 0;">825.02</span>
<span class="t m" style="top:595.01px;font-size:20.2px;right:1427.92px;transform:scaleX(0.9500);transform-origin:100% 0;">917.67</span>
<span class="t m" style="top:595.01px;font-size:20.2px;right:1058.26px;transform:scaleX(0.9500);transform-origin:100% 0;">+161.94</span>
<div class="b" style="left:851.8000000000001px;top:590.90px;width:7.91px;height:25.2px;background:#1aab40;"></div>
<span class="t m" style="top:595.01px;font-size:20.2px;left:870.77px;transform:scaleX(0.9500);transform-origin:0 0;">1,079.61</span>
<span class="t" style="top:627.25px;font-size:20px;left:49.01px;transform:scaleX(0.9941);transform-origin:0 0;">Cameras and</span>
<span class="t" style="top:627.25px;font-size:20px;left:167.83px;transform:scaleX(0.7671);transform-origin:0 0;">…</span>
<span class="t" style="top:627.25px;font-size:20px;left:205.62px;transform:scaleX(0.9892);transform-origin:0 0;">Digital SLR Cameras</span>
<span class="t m" style="top:626.79px;font-size:20.2px;right:1607.91px;transform:scaleX(0.9500);transform-origin:100% 0;">618.20</span>
<span class="t m" style="top:626.79px;font-size:20.2px;right:1427.82px;transform:scaleX(0.9500);transform-origin:100% 0;">397.02</span>
<span class="t m" style="top:626.79px;font-size:20.2px;right:1057.87px;transform:scaleX(0.9500);transform-origin:100% 0;">+770.69</span>
<div class="b" style="left:851.8000000000001px;top:622.68px;width:8.60px;height:25.2px;background:#1aab40;"></div>
<span class="t m" style="top:626.79px;font-size:20.2px;left:871.41px;transform:scaleX(0.9500);transform-origin:0 0;">1,167.70</span>
<span class="t" style="top:659.03px;font-size:20px;left:48.97px;transform:scaleX(1.0327);transform-origin:0 0;">Cell phones</span>
<span class="t" style="top:659.03px;font-size:20px;left:206.19px;transform:scaleX(1.0065);transform-origin:0 0;">Cell phones Accessories</span>
<span class="t m" style="top:658.57px;font-size:20.2px;right:1608.18px;transform:scaleX(0.9500);transform-origin:100% 0;">9.64</span>
<span class="t m" style="top:658.57px;font-size:20.2px;right:1428.53px;transform:scaleX(0.9500);transform-origin:100% 0;">19.64</span>
<span class="t m" style="top:658.57px;font-size:20.2px;right:1058.33px;transform:scaleX(0.9500);transform-origin:100% 0;">-0.94</span>
<div class="b" style="left:851.8000000000001px;top:654.46px;width:1.90px;height:25.2px;background:#1aab40;"></div>
<span class="t m" style="top:658.57px;font-size:20.2px;left:864.40px;transform:scaleX(0.9500);transform-origin:0 0;">18.70</span>
<span class="t" style="top:690.81px;font-size:20px;left:48.97px;transform:scaleX(1.0327);transform-origin:0 0;">Cell phones</span>
<span class="t" style="top:690.81px;font-size:20px;left:205.54px;transform:scaleX(1.0403);transform-origin:0 0;">Home &amp; Office Phones</span>
<span class="t m" style="top:690.35px;font-size:20.2px;right:1607.95px;transform:scaleX(0.9500);transform-origin:100% 0;">40.28</span>
<span class="t m" style="top:690.35px;font-size:20.2px;right:1428.25px;transform:scaleX(0.9500);transform-origin:100% 0;">79.98</span>
<span class="t m" style="top:690.35px;font-size:20.2px;right:1057.95px;transform:scaleX(0.9500);transform-origin:100% 0;">-3.81</span>
<div class="b" style="left:851.8000000000001px;top:686.24px;width:1.90px;height:25.2px;background:#1aab40;"></div>
<span class="t m" style="top:690.35px;font-size:20.2px;left:864.40px;transform:scaleX(0.9500);transform-origin:0 0;">76.17</span>
<span class="t" style="top:722.59px;font-size:20px;left:48.97px;transform:scaleX(1.0327);transform-origin:0 0;">Cell phones</span>
<span class="t" style="top:722.59px;font-size:20px;left:206.30px;transform:scaleX(0.9960);transform-origin:0 0;">Smart phones &amp; PDAs</span>
<span class="t m" style="top:722.13px;font-size:20.2px;right:1607.81px;transform:scaleX(0.9500);transform-origin:100% 0;">241.11</span>
<span class="t m" style="top:722.13px;font-size:20.2px;right:1427.92px;transform:scaleX(0.9500);transform-origin:100% 0;">508.63</span>
<span class="t m" style="top:722.13px;font-size:20.2px;right:1057.62px;transform:scaleX(0.9500);transform-origin:100% 0;">-24.22</span>
<div class="b" style="left:851.8000000000001px;top:718.02px;width:3.28px;height:25.2px;background:#1aab40;"></div>
<span class="t m" style="top:722.13px;font-size:20.2px;left:866.43px;transform:scaleX(0.9500);transform-origin:0 0;">484.41</span>
<span class="t" style="top:754.37px;font-size:20px;left:48.97px;transform:scaleX(1.0327);transform-origin:0 0;">Cell phones</span>
<span class="t" style="top:754.37px;font-size:20px;left:206.80px;transform:scaleX(0.9897);transform-origin:0 0;">Touch Screen Phones</span>
<span class="t m" style="top:753.91px;font-size:20.2px;right:1608.19px;transform:scaleX(0.9500);transform-origin:100% 0;">267.74</span>
<span class="t m" style="top:753.91px;font-size:20.2px;right:1428.11px;transform:scaleX(0.9500);transform-origin:100% 0;">543.99</span>
<span class="t m" style="top:753.91px;font-size:20.2px;right:1058.01px;transform:scaleX(0.9500);transform-origin:100% 0;">-25.90</span>
<div class="b" style="left:851.8000000000001px;top:749.80px;width:3.54px;height:25.2px;background:#1aab40;"></div>
<span class="t m" style="top:753.91px;font-size:20.2px;left:866.68px;transform:scaleX(0.9500);transform-origin:0 0;">518.09</span>
<span class="t" style="top:786.15px;font-size:20px;left:48.96px;transform:scaleX(1.0354);transform-origin:0 0;">Computers</span>
<span class="t" style="top:786.15px;font-size:20px;left:206.29px;transform:scaleX(1.0143);transform-origin:0 0;">Other Accessories</span>
<span class="t m" style="top:785.69px;font-size:20.2px;right:1607.62px;transform:scaleX(0.9500);transform-origin:100% 0;">572.23</span>
<span class="t m" style="top:785.69px;font-size:20.2px;right:1428.49px;transform:scaleX(0.9500);transform-origin:100% 0;">220.44</span>
<span class="t m" style="top:785.69px;font-size:20.2px;right:1057.87px;transform:scaleX(0.9500);transform-origin:100% 0;">+479.59</span>
<div class="b" style="left:851.8000000000001px;top:781.58px;width:4.96px;height:25.2px;background:#1aab40;"></div>
<span class="t m" style="top:785.69px;font-size:20.2px;left:868.00px;transform:scaleX(0.9500);transform-origin:0 0;">700.04</span>
<span class="t" style="top:817.93px;font-size:20px;left:48.96px;transform:scaleX(1.0354);transform-origin:0 0;">Computers</span>
<span class="t" style="top:817.93px;font-size:20px;left:206.19px;transform:scaleX(1.0072);transform-origin:0 0;">Computers Accessories</span>
<span class="t m" style="top:817.47px;font-size:20.2px;right:1607.62px;transform:scaleX(0.9500);transform-origin:100% 0;">572.23</span>
<span class="t m" style="top:817.47px;font-size:20.2px;right:1427.82px;transform:scaleX(0.9500);transform-origin:100% 0;">329.02</span>
<span class="t m" style="top:817.47px;font-size:20.2px;right:1057.58px;transform:scaleX(0.9500);transform-origin:100% 0;">+371.02</span>
<div class="b" style="left:851.8000000000001px;top:813.36px;width:4.96px;height:25.2px;background:#1aab40;"></div>
<span class="t m" style="top:817.47px;font-size:20.2px;left:868.00px;transform:scaleX(0.9500);transform-origin:0 0;">700.04</span>
<span class="t" style="top:849.71px;font-size:20px;left:48.96px;transform:scaleX(1.0354);transform-origin:0 0;">Computers</span>
<span class="t" style="top:849.71px;font-size:20px;left:205.57px;transform:scaleX(1.0173);transform-origin:0 0;">Desktops</span>
<span class="t m" style="top:849.25px;font-size:20.2px;right:1607.91px;transform:scaleX(0.9500);transform-origin:100% 0;">884.58</span>
<span class="t m" style="top:849.25px;font-size:20.2px;right:1428.49px;transform:scaleX(0.9500);transform-origin:100% 0;">220.44</span>
<span class="t m" style="top:849.25px;font-size:20.2px;right:1057.97px;transform:scaleX(0.9500);transform-origin:100% 0;">+829.28</span>
<div class="b" style="left:851.8000000000001px;top:845.14px;width:7.68px;height:25.2px;background:#1aab40;"></div>
<span class="t m" style="top:849.25px;font-size:20.2px;left:870.55px;transform:scaleX(0.9500);transform-origin:0 0;">1,049.73</span>
<span class="t" style="top:881.49px;font-size:20px;left:48.96px;transform:scaleX(1.0354);transform-origin:0 0;">Computers</span>
<span class="t" style="top:881.49px;font-size:20px;left:205.54px;transform:scaleX(1.0348);transform-origin:0 0;">Laptops</span>
<span class="t m" style="top:881.03px;font-size:20.2px;right:1608.21px;transform:scaleX(0.9500);transform-origin:100% 0;">3,103.74</span>
<span class="t m" style="top:881.03px;font-size:20.2px;right:1427.94px;transform:scaleX(0.9500);transform-origin:100% 0;">4,677.17</span>
<span class="t m" style="top:881.03px;font-size:20.2px;right:1057.97px;transform:scaleX(0.9500);transform-origin:100% 0;">-905.26</span>
<div class="b" style="left:851.8000000000001px;top:876.92px;width:28.90px;height:25.2px;background:#1aab40;"></div>
<span class="t m" style="top:881.03px;font-size:20.2px;left:890.39px;transform:scaleX(0.9500);transform-origin:0 0;">3,771.91</span>
<span class="t" style="top:913.27px;font-size:20px;left:48.96px;transform:scaleX(1.0354);transform-origin:0 0;">Computers</span>
<span class="t" style="top:913.27px;font-size:20px;left:205.46px;transform:scaleX(1.0874);transform-origin:0 0;">Monitors</span>
<span class="t m" style="top:912.81px;font-size:20.2px;right:1607.64px;transform:scaleX(0.9500);transform-origin:100% 0;">1,732.07</span>
<span class="t m" style="top:912.81px;font-size:20.2px;right:1428.21px;transform:scaleX(0.9500);transform-origin:100% 0;">258.70</span>
<span class="t m" style="top:912.81px;font-size:20.2px;right:1057.99px;transform:scaleX(0.9500);transform-origin:100% 0;">+1,897.16</span>
<div class="b" style="left:851.8000000000001px;top:908.70px;width:16.30px;height:25.2px;background:#1aab40;"></div>
<span class="t m" style="top:912.81px;font-size:20.2px;left:878.61px;transform:scaleX(0.9500);transform-origin:0 0;">2,155.86</span>
<span class="t" style="top:945.05px;font-size:20px;left:48.96px;transform:scaleX(1.0354);transform-origin:0 0;">Computers</span>
<span class="t" style="top:945.05px;font-size:20px;left:205.58px;transform:scaleX(1.0136);transform-origin:0 0;">Printers, Scanners &amp; Fax</span>
<span class="t m" style="top:944.59px;font-size:20.2px;right:1607.92px;transform:scaleX(0.9500);transform-origin:100% 0;">1,000.66</span>
<span class="t m" style="top:944.59px;font-size:20.2px;right:1428.22px;transform:scaleX(0.9500);transform-origin:100% 0;">2,622.86</span>
<span class="t m" style="top:944.59px;font-size:20.2px;right:1057.70px;transform:scaleX(0.9500);transform-origin:100% 0;">-1,402.93</span>
<div class="b" style="left:851.8000000000001px;top:940.48px;width:9.01px;height:25.2px;background:#1aab40;"></div>
<span class="t m" style="top:944.59px;font-size:20.2px;left:871.79px;transform:scaleX(0.9500);transform-origin:0 0;">1,219.93</span>
<span class="t" style="top:976.83px;font-size:20px;left:48.96px;transform:scaleX(1.0354);transform-origin:0 0;">Computers</span>
<span class="t" style="top:976.83px;font-size:20px;left:205.57px;transform:scaleX(1.0178);transform-origin:0 0;">Projectors &amp; Screens</span>
<span class="t m" style="top:976.37px;font-size:20.2px;right:1607.64px;transform:scaleX(0.9500);transform-origin:100% 0;">4,973.97</span>
<span class="t m" style="top:976.37px;font-size:20.2px;right:1428.13px;transform:scaleX(0.9500);transform-origin:100% 0;">8,741.41</span>
<span class="t m" style="top:976.37px;font-size:20.2px;right:1057.70px;transform:scaleX(0.9500);transform-origin:100% 0;">-2,794.87</span>
<div class="b" style="left:851.8000000000001px;top:972.26px;width:45.85px;height:25.2px;background:#1aab40;"></div>
<span class="t m" style="top:976.37px;font-size:20.2px;left:906.24px;transform:scaleX(0.9500);transform-origin:0 0;">5,946.54</span>
<span class="t" style="top:1008.61px;font-size:20px;left:49.00px;transform:scaleX(0.9958);transform-origin:0 0;">Games and T</span>
<span class="t" style="top:1008.61px;font-size:20px;left:166.91px;transform:scaleX(0.7740);transform-origin:0 0;">…</span>
<span class="t" style="top:1008.61px;font-size:20px;left:205.60px;transform:scaleX(0.9992);transform-origin:0 0;">Boxed Games</span>
<span class="t m" style="top:1008.15px;font-size:20.2px;right:1607.79px;transform:scaleX(0.9500);transform-origin:100% 0;">4.99</span>
<span class="t m" style="top:1008.15px;font-size:20.2px;right:1428.25px;transform:scaleX(0.9500);transform-origin:100% 0;">10.30</span>
<span class="t m" style="top:1008.15px;font-size:20.2px;right:1057.95px;transform:scaleX(0.9500);transform-origin:100% 0;">-0.49</span>
<div class="b" style="left:851.8000000000001px;top:1004.04px;width:1.90px;height:25.2px;background:#1aab40;"></div>
<span class="t m" style="top:1008.15px;font-size:20.2px;left:864.40px;transform:scaleX(0.9500);transform-origin:0 0;">9.81</span>
<span class="t" style="top:1040.39px;font-size:20px;left:49.00px;transform:scaleX(0.9958);transform-origin:0 0;">Games and T</span>
<span class="t" style="top:1040.39px;font-size:20px;left:166.91px;transform:scaleX(0.7740);transform-origin:0 0;">…</span>
<span class="t" style="top:1040.39px;font-size:20px;left:205.56px;transform:scaleX(1.0274);transform-origin:0 0;">Download Games</span>
<span class="t m" style="top:1039.93px;font-size:20.2px;right:1607.56px;transform:scaleX(0.9500);transform-origin:100% 0;">78.55</span>
<span class="t m" style="top:1039.93px;font-size:20.2px;right:1428.21px;transform:scaleX(0.9500);transform-origin:100% 0;">166.90</span>
<span class="t m" style="top:1039.93px;font-size:20.2px;right:1057.66px;transform:scaleX(0.9500);transform-origin:100% 0;">-7.95</span>
<div class="b" style="left:851.8000000000001px;top:1035.82px;width:1.90px;height:25.2px;background:#1aab40;"></div>
<span class="t m" style="top:1039.93px;font-size:20.2px;left:864.40px;transform:scaleX(0.9500);transform-origin:0 0;">158.96</span>
<span class="t" style="top:1072.17px;font-size:20px;left:49.03px;transform:scaleX(1.0429);transform-origin:0 0;">Home Applia</span>
<span class="t" style="top:1072.17px;font-size:20px;left:167.77px;transform:scaleX(0.7877);transform-origin:0 0;">…</span>
<span class="t" style="top:1072.17px;font-size:20px;left:207.20px;transform:scaleX(1.0360);transform-origin:0 0;">Air Conditioners</span>
<span class="t m" style="top:1071.71px;font-size:20.2px;right:1607.91px;transform:scaleX(0.9500);transform-origin:100% 0;">347.28</span>
<span class="t m" style="top:1071.71px;font-size:20.2px;right:1428.11px;transform:scaleX(0.9500);transform-origin:100% 0;">629.99</span>
<span class="t m" style="top:1071.71px;font-size:20.2px;right:1058.01px;transform:scaleX(0.9500);transform-origin:100% 0;">-30.00</span>
<div class="b" style="left:851.8000000000001px;top:1067.60px;width:4.18px;height:25.2px;background:#1aab40;"></div>
<span class="t m" style="top:1071.71px;font-size:20.2px;left:867.27px;transform:scaleX(0.9500);transform-origin:0 0;">599.99</span>
<span class="t" style="top:1103.95px;font-size:20px;left:49.03px;transform:scaleX(1.0429);transform-origin:0 0;">Home Applia</span>
<span class="t" style="top:1103.95px;font-size:20px;left:167.77px;transform:scaleX(0.7877);transform-origin:0 0;">…</span>
<span class="t" style="top:1103.95px;font-size:20px;left:206.17px;transform:scaleX(1.0297);transform-origin:0 0;">Coffee Machines</span>
<span class="t m" style="top:1103.49px;font-size:20.2px;right:1608.19px;transform:scaleX(0.9500);transform-origin:100% 0;">560.44</span>
<span class="t m" style="top:1103.49px;font-size:20.2px;right:1427.82px;transform:scaleX(0.9500);transform-origin:100% 0;">860.15</span>
<span class="t m" style="top:1103.49px;font-size:20.2px;right:1057.68px;transform:scaleX(0.9500);transform-origin:100% 0;">+176.17</span>
<div class="b" style="left:851.8000000000001px;top:1099.38px;width:7.58px;height:25.2px;background:#1aab40;"></div>
<span class="t m" style="top:1103.49px;font-size:20.2px;left:870.45px;transform:scaleX(0.9500);transform-origin:0 0;">1,036.32</span>
<span class="t" style="top:1135.73px;font-size:20px;left:49.03px;transform:scaleX(1.0429);transform-origin:0 0;">Home Applia</span>
<span class="t" style="top:1135.73px;font-size:20px;left:167.77px;transform:scaleX(0.7877);transform-origin:0 0;">…</span>
<span class="t" style="top:1135.73px;font-size:20px;left:205.69px;transform:scaleX(0.9408);transform-origin:0 0;">Fans</span>
<span class="t m" style="top:1135.27px;font-size:20.2px;right:1607.52px;transform:scaleX(0.9500);transform-origin:100% 0;">101.42</span>
<span class="t m" style="top:1135.27px;font-size:20.2px;right:1427.92px;transform:scaleX(0.9500);transform-origin:100% 0;">194.03</span>
<span class="t m" style="top:1135.27px;font-size:20.2px;right:1058.33px;transform:scaleX(0.9500);transform-origin:100% 0;">-9.24</span>
<div class="b" style="left:851.8000000000001px;top:1131.16px;width:1.90px;height:25.2px;background:#1aab40;"></div>
<span class="t m" style="top:1135.27px;font-size:20.2px;left:864.40px;transform:scaleX(0.9500);transform-origin:0 0;">184.79</span>
<span class="t" style="top:1167.51px;font-size:20px;left:49.03px;transform:scaleX(1.0429);transform-origin:0 0;">Home Applia</span>
<span class="t" style="top:1167.51px;font-size:20px;left:167.77px;transform:scaleX(0.7877);transform-origin:0 0;">…</span>
<span class="t" style="top:1167.51px;font-size:20px;left:205.59px;transform:scaleX(1.0069);transform-origin:0 0;">Lamps</span>
<span class="t m" style="top:1167.05px;font-size:20.2px;right:1607.91px;transform:scaleX(0.9500);transform-origin:100% 0;">517.56</span>
<span class="t m" style="top:1167.05px;font-size:20.2px;right:1428.22px;transform:scaleX(0.9500);transform-origin:100% 0;">1,225.60</span>
<span class="t m" style="top:1167.05px;font-size:20.2px;right:1057.87px;transform:scaleX(0.9500);transform-origin:100% 0;">-237.21</span>
<div class="b" style="left:851.8000000000001px;top:1162.94px;width:7.20px;height:25.2px;background:#1aab40;"></div>
<span class="t m" style="top:1167.05px;font-size:20.2px;left:870.10px;transform:scaleX(0.9500);transform-origin:0 0;">988.39</span>
<svg class="b" style="left:418px;top:786px" width="22" height="22" viewBox="418 786 22 22"><path d="M422.2 802.8L423.4 797.6L432.6 788.4a1.9 1.9 0 0 1 2.7 0l0.8 0.8a1.9 1.9 0 0 1 0 2.7L426.9 801.1ZM423.6 797.5l3.4 3.4M431 790l3.5 3.5" fill="none" stroke="#444" stroke-width="1.2" stroke-linejoin="round"/></svg>
<svg class="b" style="left:1005px;top:772px;filter:drop-shadow(1.5px 2px 2.5px rgba(0,0,0,.45))" width="100" height="46" viewBox="1005 772 100 46"><path d="M1017.7 794.5L1043.9 782.8L1041.4 788.8L1088.2 793.5a1 1 0 0 1 0 2L1041.4 800.5L1043.9 806.3Z" fill="#ff2865"/></svg>
<div class="b" style="left:18.5px;top:297px;width:24.3px;height:34.7px;background:#dbdbdb;box-shadow:0 2px 3px rgba(0,0,0,.2);"></div>
<div class="b" style="left:19.9px;top:299.2px;width:21.5px;height:31.1px;background:#f5f5f5;"></div>
<svg class="b" style="left:24px;top:306px" width="14" height="18" viewBox="24 306 14 18"><rect x="26.55" y="308.15" width="2.3" height="2.3" fill="#222"/><rect x="26.55" y="313.35" width="2.3" height="2.3" fill="#222"/><rect x="26.55" y="318.55" width="2.3" height="2.3" fill="#222"/><rect x="32.05" y="308.15" width="2.3" height="2.3" fill="#222"/><rect x="32.05" y="313.35" width="2.3" height="2.3" fill="#222"/><rect x="32.05" y="318.55" width="2.3" height="2.3" fill="#222"/></svg>
<!-- footer -->
<div class="b" style="left:13px;top:1212.8px;width:2240px;height:1.4px;background:#dcdcdc;"></div>
<span class="t" style="top:1226.30px;font-size:21.5px;left:13.18px;transform:scaleX(0.9728);transform-origin:0 0;">Total rows: 34</span>
<span class="t" style="top:1226.30px;font-size:21.5px;left:163.70px;transform:scaleX(0.9281);transform-origin:0 0;">Sum:</span>
<span class="t m" style="top:1227.20px;font-size:20.8px;left:217.65px;transform:scaleX(0.9250);transform-origin:0 0;">77.97m</span>
<span class="t" style="top:1226.30px;font-size:21.5px;left:308.90px;transform:scaleX(0.9376);transform-origin:0 0;">Avg:</span>
<span class="t m" style="top:1227.20px;font-size:20.8px;left:355.06px;transform:scaleX(0.9250);transform-origin:0 0;">2.29m</span>
<span class="t" style="top:1226.30px;font-size:21.5px;left:434.31px;transform:scaleX(1.0098);transform-origin:0 0;">Count:</span>
<span class="t m" style="top:1227.20px;font-size:20.8px;left:505.55px;transform:scaleX(0.9250);transform-origin:0 0;">34</span>
<svg class="b" style="left:546px;top:1225px" width="30" height="26" viewBox="546 1225 30 26"><path d="M549.65 1237.9A10 10 0 0 1 552 1231.8M554.1 1229.9A10 10 0 0 1 569.65 1237.9" fill="none" stroke="#222" stroke-width="1.4"/><path d="M556.6 1236.3A3.7 3.7 0 0 0 562.3 1240.7M560.2 1234.1A3.7 3.7 0 0 1 563.7 1237.6" fill="none" stroke="#222" stroke-width="1.4"/><path d="M550.2 1228L567.7 1245.3" fill="none" stroke="#222" stroke-width="1.4"/></svg>
<svg class="b" style="left:1522px;top:1220px" width="36" height="36" viewBox="1522 1220 36 36"><path d="M1553.23 1236.32L1553.23 1239.88L1549.44 1240.54L1548.39 1243.09L1550.60 1246.23L1548.08 1248.75L1544.94 1246.54L1542.39 1247.59L1541.73 1251.38L1538.17 1251.38L1537.51 1247.59L1534.96 1246.54L1531.82 1248.75L1529.30 1246.23L1531.51 1243.09L1530.46 1240.54L1526.67 1239.88L1526.67 1236.32L1530.46 1235.66L1531.51 1233.11L1529.30 1229.97L1531.82 1227.45L1534.96 1229.66L1537.51 1228.61L1538.17 1224.82L1541.73 1224.82L1542.39 1228.61L1544.94 1229.66L1548.08 1227.45L1550.60 1229.97L1548.39 1233.11L1549.44 1235.66Z" fill="none" stroke="#3a3a3a" stroke-width="1.5" stroke-linejoin="round"/><circle cx="1539.9" cy="1238.1" r="5.5" fill="none" stroke="#0d47a1" stroke-width="1.9"/></svg>
<div class="b" style="left:1573.2px;top:1238.5px;width:17.8px;height:2.1px;background:#222;"></div>
<div class="b" style="left:1605.6px;top:1223.1px;width:97.1px;height:34.8px;background:#fff;"></div>
<div class="b" style="left:1605.6px;top:1223.1px;width:97.1px;height:1.9px;background:#adadad;"></div>
<div class="b" style="left:1605.6px;top:1256.0px;width:97.1px;height:1.9px;background:#adadad;"></div>
<div class="b" style="left:1605.6px;top:1223.1px;width:1.9px;height:34.8px;background:#adadad;"></div>
<div class="b" style="left:1700.8px;top:1223.1px;width:1.9px;height:34.8px;background:#adadad;"></div>
<span class="t m" style="top:1231.33px;font-size:21px;left:1626.88px;transform:scaleX(0.9200);transform-origin:0 0;">100</span>
<span class="t" style="top:1230.04px;font-size:22.4px;left:1665.34px;transform:scaleX(0.8384);transform-origin:0 0;">%</span>
<div class="b" style="left:1713px;top:1238.85px;width:18.2px;height:2.1px;background:#222;"></div>
<div class="b" style="left:1720.8px;top:1231.1px;width:2.1px;height:18px;background:#222;"></div>
<svg class="b" style="left:1762px;top:1224px" width="50" height="28" viewBox="1762 1224 50 28"><rect x="1765.6" y="1228.6" width="2.2" height="17.6" fill="#a9a9a9"/><path d="M1783.6 1229L1774.8 1237.4L1783.6 1245.8" fill="none" stroke="#a9a9a9" stroke-width="2.8"/><path d="M1805.4 1229L1796.6 1237.4L1805.4 1245.8" fill="none" stroke="#a9a9a9" stroke-width="2.8"/></svg>
<span class="t" style="top:1226.10px;font-size:21.5px;left:1815.19px;transform:scaleX(0.8755);transform-origin:0 0;">Page</span>
<div class="b" style="left:1867px;top:1219.4px;width:43.4px;height:33.6px;background:#fff;"></div>
<div class="b" style="left:1867px;top:1219.4px;width:43.4px;height:1.7px;background:#dedede;"></div>
<div class="b" style="left:1867px;top:1251.3px;width:43.4px;height:1.7px;background:#dedede;"></div>
<div class="b" style="left:1867px;top:1219.4px;width:1.7px;height:33.6px;background:#dedede;"></div>
<div class="b" style="left:1908.7px;top:1219.4px;width:1.7px;height:33.6px;background:#dedede;"></div>
<span class="t" style="top:1226.10px;font-size:21.5px;left:1882.63px;transform:scaleX(0.7271);transform-origin:0 0;">1</span>
<span class="t" style="top:1226.10px;font-size:21.5px;left:1917.86px;transform:scaleX(0.9745);transform-origin:0 0;">of 2</span>
<svg class="b" style="left:1958px;top:1224px" width="50" height="28" viewBox="1958 1224 50 28"><path d="M1964.2 1229L1973 1237.4L1964.2 1245.8" fill="none" stroke="#1a1a1a" stroke-width="2.9"/><path d="M1985.4 1229L1994.2 1237.4L1985.4 1245.8" fill="none" stroke="#1a1a1a" stroke-width="2.9"/><rect x="2000.7" y="1228.6" width="2.3" height="17.6" fill="#1a1a1a"/></svg>
<span class="t" style="top:1226.10px;font-size:21.5px;left:2086.23px;transform:scaleX(1.0999);transform-origin:0 0;">1 to 25 of 34</span>
<svg class="b" style="left:2220px;top:1220px" width="36" height="36" viewBox="2220 1220 36 36"><rect x="2222.8" y="1223" width="30.1" height="6.9" fill="#ef3f3f"/><rect x="2222.8" y="1231.6" width="5.7" height="11" fill="#f9b21d"/><rect x="2222.8" y="1244" width="5.7" height="9" fill="#f9b21d"/><rect x="2230" y="1231.6" width="11.8" height="11" fill="#6bbf4f"/><rect x="2243.6" y="1231.6" width="9.3" height="11" fill="#6bbf4f"/><rect x="2230" y="1244" width="11.8" height="9" fill="#6bbf4f"/><rect x="2243.6" y="1244" width="9.3" height="9" fill="#6bbf4f"/></svg>
</body></html>
